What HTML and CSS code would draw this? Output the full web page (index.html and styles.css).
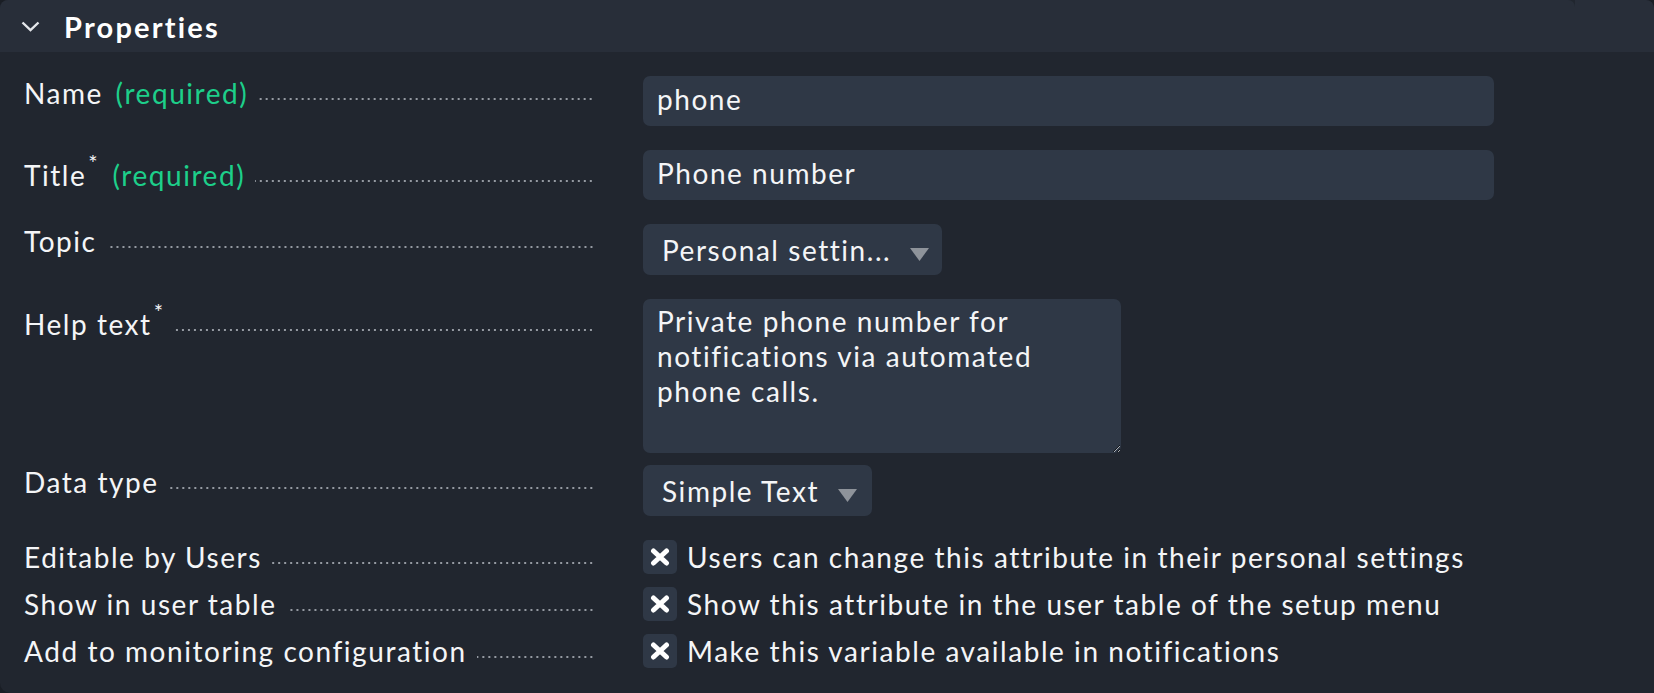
FILE: index.html
```html
<!DOCTYPE html>
<html>
<head>
<meta charset="utf-8">
<link rel="stylesheet" href="styles.css">
</head>
<body>
<div class="panel">
  <div class="head">
    <div class="head-main">
      <svg class="chev" width="19" height="11" viewBox="0 0 19 11"><polyline points="1.5,1.5 9.5,9.2 17.5,1.5" fill="none" stroke="#e4e6ea" stroke-width="2.4"/></svg>
      <span class="head-title">Properties</span>
    </div>
    <div class="head-rest"></div>
  </div>
  <div class="form">
    <div class="row">
      <div class="lbl"><span class="txt">Name <span class="req">(required)</span></span><span class="lead"></span></div>
      <div class="fld"><div class="input">phone</div></div>
    </div>
    <div class="row">
      <div class="lbl tall"><span class="txt">Title<sup>*</sup> <span class="req">(required)</span></span><span class="lead"></span></div>
      <div class="fld"><div class="input">Phone number</div></div>
    </div>
    <div class="row">
      <div class="lbl"><span class="txt">Topic</span><span class="lead"></span></div>
      <div class="fld"><div class="select topic"><span>Personal settin...</span><svg class="tri" width="19" height="13" viewBox="0 0 19 13"><polygon points="0,0 19,0 9.5,13" fill="#8e939a"/></svg></div></div>
    </div>
    <div class="row tight">
      <div class="lbl tall"><span class="txt">Help text<sup>*</sup></span><span class="lead"></span></div>
      <div class="fld"><textarea class="area" wrap="off">Private phone number for
notifications via automated
phone calls.</textarea></div>
    </div>
    <div class="row">
      <div class="lbl"><span class="txt">Data type</span><span class="lead"></span></div>
      <div class="fld"><div class="select dtype"><span>Simple Text</span><svg class="tri" width="19" height="13" viewBox="0 0 19 13"><polygon points="0,0 19,0 9.5,13" fill="#8e939a"/></svg></div></div>
    </div>
    <div class="row check">
      <div class="lbl"><span class="txt">Editable by Users</span><span class="lead"></span></div>
      <div class="fld cb"><span class="box"><svg width="20" height="18" viewBox="0 0 20 18"><path d="M3.5 3 L16.5 15 M16.5 3 L3.5 15" stroke="#fff" stroke-width="5" stroke-linecap="round"/></svg></span><span class="cbt">Users can change this attribute in their personal settings</span></div>
    </div>
    <div class="row check">
      <div class="lbl"><span class="txt">Show in user table</span><span class="lead"></span></div>
      <div class="fld cb"><span class="box"><svg width="20" height="18" viewBox="0 0 20 18"><path d="M3.5 3 L16.5 15 M16.5 3 L3.5 15" stroke="#fff" stroke-width="5" stroke-linecap="round"/></svg></span><span class="cbt">Show this attribute in the user table of the setup menu</span></div>
    </div>
    <div class="row check">
      <div class="lbl"><span class="txt">Add to monitoring configuration</span><span class="lead"></span></div>
      <div class="fld cb"><span class="box"><svg width="20" height="18" viewBox="0 0 20 18"><path d="M3.5 3 L16.5 15 M16.5 3 L3.5 15" stroke="#fff" stroke-width="5" stroke-linecap="round"/></svg></span><span class="cbt">Make this variable available in notifications</span></div>
    </div>
  </div>
</div>
</body>
</html>
```

FILE: styles.css
```css
html, body {
  margin: 0;
  padding: 0;
  background: #1a1e25;
}
body {
  font-family: Lato, "Open Sans", sans-serif;
  font-size: 28px;
  letter-spacing: 1.55px;
  color: #f4f5f7;
}
.panel {
  width: 1654px;
  height: 693px;
  background: #21262f;
  border-radius: 8px 8px 0 10px;
  overflow: hidden;
}
.head {
  display: flex;
  height: 52px;
}
.head-main {
  width: 1575px;
  background: #282e39;
  border-top-right-radius: 7px;
  display: flex;
  align-items: center;
  padding-left: 21px;
  gap: 24px;
  box-sizing: border-box;
}
.head-rest {
  flex: 1;
  background: #282e39;
  border-top-right-radius: 7px;
}
.chev { display: block; }
.head-title {
  font-weight: 700;
  font-size: 29px;
  letter-spacing: 2.2px;
  color: #ffffff;
}
.form {
  padding: 24px 0 0 24px;
}
.row {
  display: grid;
  grid-template-columns: 570px auto;
  column-gap: 49px;
  align-items: start;
  padding-bottom: 24px;
}
.row.tight { padding-bottom: 12px; }
.row.check { padding-bottom: 13px; }
.lbl {
  display: flex;
  line-height: 34px;
  white-space: nowrap;
}
.lbl.tall { padding-top: 8px; }
.lbl sup {
  font-size: 22px;
  line-height: 0;
  vertical-align: 0;
  position: relative;
  top: -15px;
  margin-left: 2px;
  margin-right: 2px;
  letter-spacing: 0;
}
.req { color: #1dcf8a; margin-left: 4px; }
.lead {
  flex: 1;
  margin-left: 10px;
  height: 34px;
  background-image: radial-gradient(circle, #959aa2 0 1.15px, transparent 1.55px);
  background-size: 6px 4px;
  background-repeat: repeat-x;
  background-position: right 21px;
}
.fld { display: flex; }
.input {
  width: 851px;
  height: 50px;
  box-sizing: border-box;
  background: #2f3846;
  border-radius: 7px;
  padding-left: 14px;
  line-height: 46px;
}
.select {
  height: 51px;
  box-sizing: border-box;
  background: #2f3846;
  border-radius: 7px;
  padding: 0 17px 0 19px;
  display: flex;
  align-items: center;
  gap: 19px;
  white-space: nowrap;
}
.select.topic { width: 299px; }
.select.dtype { width: 229px; }
.tri { display: block; margin-top: 10px; flex: none; }
.area {
  width: 478px;
  height: 154px;
  box-sizing: border-box;
  background: #2f3846;
  border: none;
  border-radius: 7px;
  padding: 5px 14px;
  margin: 0;
  font-family: inherit;
  font-size: 28px;
  letter-spacing: 1.55px;
  line-height: 35px;
  color: #f4f5f7;
  overflow: hidden;
  outline: none;
}
.cb {
  align-items: center;
  gap: 10px;
  height: 34px;
}
.box {
  width: 34px;
  height: 34px;
  flex: none;
  background: #2f3846;
  border-radius: 5px;
  display: flex;
  align-items: center;
  justify-content: center;
}
.box svg { display: block; }
.cbt { line-height: 34px; white-space: nowrap; }
```
